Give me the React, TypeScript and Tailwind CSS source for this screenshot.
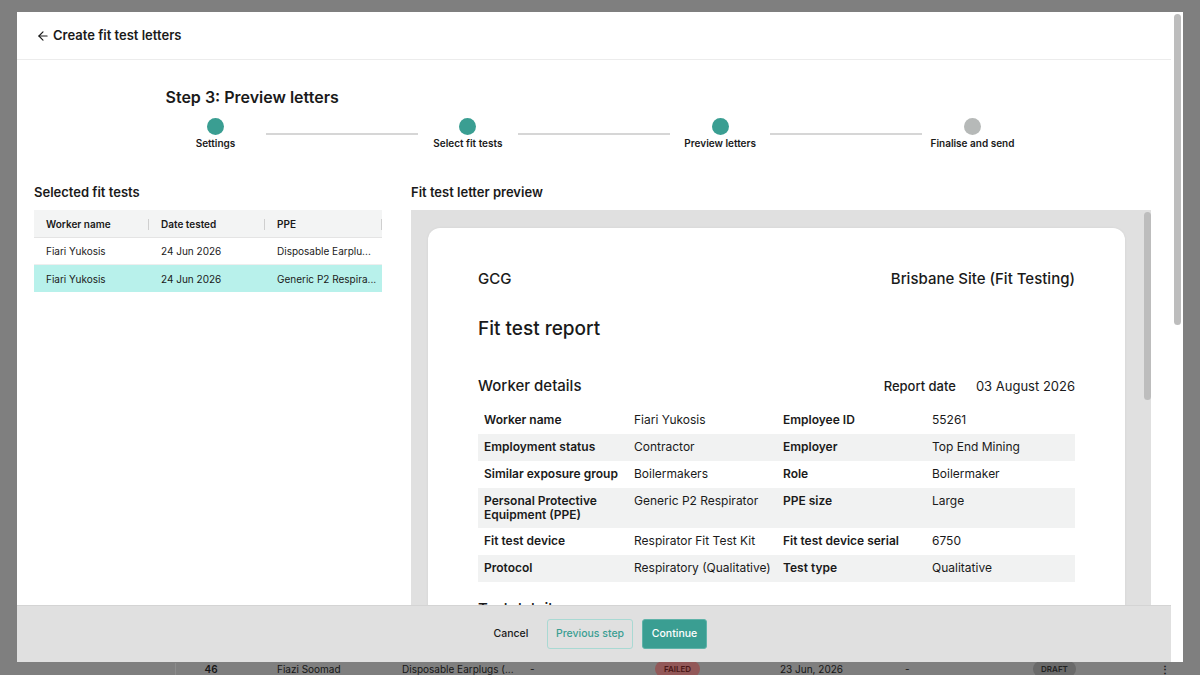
import React from 'react';
import { ArrowLeft } from 'lucide-react';

const font = { fontFamily: 'Inter, "Noto Sans", sans-serif' };

interface Step {
  label: string;
  done: boolean;
}

const steps: Step[] = [
  { label: 'Settings', done: true },
  { label: 'Select fit tests', done: true },
  { label: 'Preview letters', done: true },
  { label: 'Finalise and send', done: false },
];

// PPE names are shown clipped in the list, as in the app
const selected = [
  { name: 'Fiari Yukosis', date: '24 Jun 2026', ppe: 'Disposable Earplu...', active: false },
  { name: 'Fiari Yukosis', date: '24 Jun 2026', ppe: 'Generic P2 Respira...', active: true },
];

const details: [string, string, string, string][] = [
  ['Worker name', 'Fiari Yukosis', 'Employee ID', '55261'],
  ['Employment status', 'Contractor', 'Employer', 'Top End Mining'],
  ['Similar exposure group', 'Boilermakers', 'Role', 'Boilermaker'],
  ['Personal Protective Equipment (PPE)', 'Generic P2 Respirator', 'PPE size', 'Large'],
  ['Fit test device', 'Respirator Fit Test Kit', 'Fit test device serial', '6750'],
  ['Protocol', 'Respiratory (Qualitative)', 'Test type', 'Qualitative'],
];

// page behind the dimmed overlay
const BackgroundPage = () => (
  <div className="flex h-full w-full flex-col justify-end">
    <div className="flex h-[13px] items-center pt-[1px] text-[10px] text-[#161616]">
      <div className="h-full w-[176px] border-r border-[#8c8c8c]" />
      <div className="w-[70px] text-center font-semibold">46</div>
      <div className="w-[156px] pl-[31px]">Fiazi Soomad</div>
      <div className="w-[126px] whitespace-nowrap">Disposable Earplugs (...</div>
      <div className="w-[127px] pl-[2px]">-</div>
      <div className="flex h-[16px] w-[45px] items-center justify-center rounded-full bg-[#925858] text-[8px] font-semibold text-[#4a1616]">FAILED</div>
      <div className="w-[80px]" />
      <div className="w-[125px]">23 Jun, 2026</div>
      <div className="w-[128px]">-</div>
      <div className="flex h-[16px] w-[43px] items-center justify-center rounded-full bg-[#6a6a6a] text-[8px] font-semibold text-[#222]">DRAFT</div>
      <div className="w-[84px]" />
      <div className="font-bold leading-none">⋮</div>
    </div>
  </div>
);

const Stepper = () => (
  <div className="mx-auto w-[857px]">
    <div className="text-[16px] font-semibold leading-[20px] text-[#1a1a1a]">Step 3: Preview letters</div>
    <div className="mt-[11px] flex items-start">
      {steps.map((s, i) => (
        <React.Fragment key={s.label}>
          <div className="flex w-[100px] flex-col items-center">
            <div className={s.done ? 'h-[17px] w-[17px] rounded-full bg-[#3a9e92]' : 'h-[17px] w-[17px] rounded-full bg-[#b6b9b8]'} />
            <div className="mt-[2px] text-[10px] font-semibold leading-[12px] text-[#1a1a1a]">{s.label}</div>
          </div>
          {i < steps.length - 1 && <div className="mt-[15px] h-[2px] flex-1 bg-[#d6d6d6]" />}
        </React.Fragment>
      ))}
    </div>
  </div>
);

const SelectedTable = () => (
  <div className="w-[348px]">
    <div className="text-[13px] font-semibold leading-[16px] text-[#1a1a1a]">Selected fit tests</div>
    <div className="mt-[10px] text-[10px] text-[#1a1a1a]">
      <div className="flex h-[28px] items-center border-b border-[#e4e4e4] bg-[#f3f4f4] pt-[1px] font-semibold">
        {['Worker name', 'Date tested', 'PPE'].map((h, i) => (
          <div key={h} className={i === 0 ? 'flex w-[115px] items-center justify-between pl-[12px]' : i === 1 ? 'flex w-[116px] items-center justify-between pl-[12px]' : 'flex w-[117px] items-center justify-between pl-[12px]'}>
            <span>{h}</span>
            <span className="h-[11px] w-[1px] bg-[#cfcfcf]" />
          </div>
        ))}
      </div>
      {selected.map((r, i) => (
        <div key={i} className={r.active ? 'flex h-[27px] items-center bg-[#b8f1eb] pt-[1px]' : 'flex h-[27px] items-center border-b border-[#eeeeee] pt-[1px]'}>
          <div className="w-[115px] pl-[12px]">{r.name}</div>
          <div className="w-[116px] pl-[12px]">{r.date}</div>
          <div className="w-[117px] whitespace-nowrap pl-[12px]">{r.ppe}</div>
        </div>
      ))}
    </div>
  </div>
);

const LetterPreview = () => (
  <div className="flex min-w-0 flex-1 flex-col">
    <div className="text-[13px] font-semibold leading-[16px] text-[#1a1a1a]">Fit test letter preview</div>
    <div className="mt-[10px] flex flex-1 bg-[#e0e0e0]">
      <div className="flex-1 pl-[17px] pr-[18px] pt-[18px]">
        <div className="rounded-t-[12px] bg-white px-[50px] pb-[40px] pt-[41px] text-[#1a1a1a] shadow-[0_0_3px_rgba(0,0,0,0.06)]">
          <div className="flex items-center justify-between text-[15px] font-medium leading-[20px]">
            <span>GCG</span>
            <span>Brisbane Site (Fit Testing)</span>
          </div>
          <div className="mt-[28px] text-[19px] font-medium leading-[24px]">Fit test report</div>
          <div className="mt-[35px] flex items-center justify-between">
            <span className="text-[15px] font-medium leading-[20px]">Worker details</span>
            <div className="flex items-center gap-[20px] text-[13px] leading-[20px]">
              <span className="font-medium">Report date</span>
              <span>03 August 2026</span>
            </div>
          </div>
          <div className="mt-[11px] text-[12px] leading-[14px]">
            {details.map((row, i) => (
              <div key={i} className={i % 2 === 1 ? 'flex min-h-[27px] bg-[#f1f2f2]' : 'flex min-h-[27px]'}>
                <div className="w-[150px] px-[6px] py-[6px] font-semibold">{row[0]}</div>
                <div className="w-[149px] px-[6px] py-[6px]">{row[1]}</div>
                <div className="w-[149px] px-[6px] py-[6px] font-semibold">{row[2]}</div>
                <div className="w-[149px] px-[6px] py-[6px]">{row[3]}</div>
              </div>
            ))}
          </div>
          <div className="mt-[17px] text-[15px] font-medium leading-[20px]">Test details</div>
        </div>
      </div>
      <div className="flex w-[10px] justify-center pt-[2px]">
        <div className="h-[188px] w-[7px] rounded-full bg-[#bdbdbd]" />
      </div>
      <div className="w-[3px] bg-white" />
    </div>
  </div>
);

export default function App() {
  return (
    <div className="relative h-[675px] w-[1200px] overflow-hidden bg-[#7f7f7f]" style={font}>
      <BackgroundPage />

      {/* modal */}
      <div className="absolute left-[17px] top-[12px] flex h-[650px] w-[1166px] bg-white">
        <div className="flex w-[1154px] flex-col">
          <div className="flex h-[48px] shrink-0 items-center gap-[3px] border-b border-[#ececec] pl-[19px] pt-[1px] text-[#1a1a1a]">
            <ArrowLeft size={14} strokeWidth={2} />
            <span className="text-[13px] font-semibold">Create fit test letters</span>
          </div>

          <div className="flex min-h-0 flex-1 flex-col overflow-hidden pt-[27px]">
            <Stepper />
            <div className="mt-[35px] flex min-h-0 flex-1 gap-[29px] pl-[17px] pr-[17px]">
              <SelectedTable />
              <LetterPreview />
            </div>
          </div>

          <div className="flex h-[57px] shrink-0 items-center justify-center border-t border-[#d4d4d4] bg-[#e0e0e0] text-[10.5px] font-medium">
            <button className="h-[30px] w-[60px] text-[#1a1a1a]">Cancel</button>
            <button className="ml-[6px] h-[30px] w-[86px] rounded-[3px] border border-[#a9d9d3] text-[#3a9e92]">Previous step</button>
            <button className="ml-[9px] h-[30px] w-[65px] rounded-[3px] border border-[#5fb3a9] bg-[#3a9e92] text-white">Continue</button>
          </div>
        </div>
        <div className="flex w-[12px] justify-center pt-[2px]">
          <div className="h-[311px] w-[7px] rounded-full bg-[#bdbdbd]" />
        </div>
      </div>
    </div>
  );
}
